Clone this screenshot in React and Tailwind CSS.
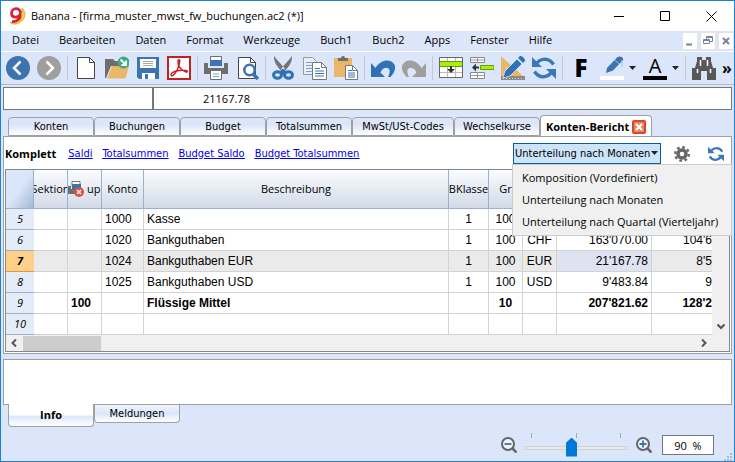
import React from "react";

const Icon = ({ label, children, className = "size-6" }) => (
  <button type="button" aria-label={label} className="shrink-0">
    <svg viewBox="0 0 24 24" className={className} fill="none">
      {children}
    </svg>
  </button>
);

const Sep = () => <span className="-mx-px h-6 w-px shrink-0 bg-[#c8c8cc]" />;

const Caret = ({ className = "" }) => (
  <svg viewBox="0 0 7 4" className={`h-1 w-[7px] ${className}`} fill="#222">
    <path d="M0 0h7L3.500 4z" />
  </svg>
);

const RefreshPaths = () => (
  <>
    <path d="M4 9.500C6 3 16 0 21.500 8.500M20 14.500C18 21 8 24 2.500 15.500" stroke="#3b78b5" strokeWidth="3.400" />
    <path d="M0 1v10h10z" fill="#3b78b5" />
    <path d="M24 23V13H14z" fill="#3b78b5" />
  </>
);

const Logo = () => (
  <svg viewBox="0 0 18 18" className="h-[18px] w-[18px]" fill="none">
    <path d="M13 1c5 4 4 14-6 16-3 .500-5-.500-6-1.500 6 0 12-4 12-14.500z" fill="#f2d044" stroke="#b59a2c" strokeWidth=".6" />
    <path d="M11.500 6c0-6-9-5.500-9 .2 0 5 6.500 5 8.500 1.500.8 4-3 7.300-8 7" stroke="#d8213b" strokeWidth="2.800" />
  </svg>
);

function Toolbar() {
  return (
    <div className="flex items-center gap-[7px] overflow-hidden border-b border-[#b4b8c0] py-1 pl-[5px]">
      <Icon label="Zurück">
        <circle cx="12" cy="12" r="12" fill="#3b74b0" />
        <path d="M14.500 5.500L8 12l6.500 6.500" stroke="#fff" strokeWidth="2.500" />
      </Icon>
      <Icon label="Vorwärts">
        <circle cx="12" cy="12" r="12" fill="#9f9f9f" />
        <path d="M9.500 5.500L16 12l-6.500 6.500" stroke="#fff" strokeWidth="2.500" />
      </Icon>
      <Sep />
      <Icon label="Neu">
        <path d="M3.500 1.500h12l5 5v16h-17z" fill="#fff" stroke="#444" />
        <path d="M15.500 1.500v5h5" stroke="#444" />
      </Icon>
      <Icon label="Öffnen">
        <path d="M0 3h8l2 2h9v5H6L1 22H0z" fill="#6e6e6e" />
        <path d="M7 10h17l-3.500 12.500H2z" fill="#ecb667" />
        <circle cx="18.500" cy="6.500" r="6" fill="#41a886" />
        <path d="M15.500 3.500l5 5M21 4.500v4.500h-4.500" stroke="#fff" strokeWidth="1.800" />
      </Icon>
      <Icon label="Speichern">
        <path d="M1 1h22v22H3l-2-2z" fill="#3b74b0" />
        <path d="M4 3h16v9H4z" fill="#fff" />
        <path d="M7 5.500h10M7 7.500h10M7 9.500h10" stroke="#aaa" />
        <path d="M6 17h13v6H6z" fill="#fff" />
        <path d="M9 18h3v5H9z" fill="#3b74b0" />
      </Icon>
      <Icon label="PDF">
        <path d="M1 1h22v22H1z" fill="#fff" stroke="#c32020" strokeWidth="2" />
        <path d="M4 18.500c1-3 8-5 15-4 2 .5 1.500 2 0 1.500-5-1.500-8.500-6.500-8-11 .3-2 2-1.500 1.800.5C12 11 9.500 16 6.500 19c-1.500 1.300-2.800.700-2.500-.5z" stroke="#c32020" strokeWidth="1.500" />
      </Icon>
      <Sep />
      <Icon label="Drucken">
        <path d="M6.500.500h11V8h-11z" fill="#fff" stroke="#6e6e6e" />
        <path d="M6 4h12v6H6z" fill="#3b74b0" />
        <path d="M0 7h4v5h16V7h4v11H0z" fill="#6e6e6e" />
        <path d="M6.500 14.500h11v9h-11z" fill="#fff" stroke="#6e6e6e" />
        <path d="M9 18h6M9 20.500h6" stroke="#72a4d5" />
      </Icon>
      <Icon label="Seitenansicht">
        <path d="M3.500 1.500h12l5 5v16h-17z" fill="#fff" stroke="#444" />
        <path d="M15.500 1.500v5h5" stroke="#444" />
        <circle cx="14.500" cy="14" r="5.200" fill="#fff" stroke="#3b74b0" strokeWidth="2.600" />
        <path d="M18 18l5 5" stroke="#3b74b0" strokeWidth="3.400" />
      </Icon>
      <Sep />
      <Icon label="Ausschneiden">
        <path d="M2 0c-.5 6 3.500 11 8 16l3-3C10 9 5 4 2 0zM20 0c.5 6-3.500 11-8 16l-3-3c3-4 8-9 11-13z" fill="#747474" />
        <path d="M7.500 16l3.500-3.500L14.500 16 11 19z" fill="#2f72b8" />
        <ellipse cx="5.500" cy="19" rx="4" ry="3.200" stroke="#2f72b8" strokeWidth="3" />
        <ellipse cx="16.500" cy="19" rx="4" ry="3.200" stroke="#2f72b8" strokeWidth="3" />
      </Icon>
      <Icon label="Kopieren">
        <path d="M.500 1.500h9l4 4v13H.500z" fill="#e8effb" stroke="#999" />
        <path d="M3 6.500h6M3 9.500h6M3 12.500h6M3 15.500h6" stroke="#7ba0cb" />
        <path d="M9.500 6.500h9l5 5v12h-14z" fill="#fff" stroke="#777" />
        <path d="M18.500 6.500v5h5" stroke="#777" />
        <path d="M12 12.500h5M12 15h9M12 17.500h9M12 20h9" stroke="#3b74b0" />
      </Icon>
      <Icon label="Einfügen">
        <path d="M0 2h18v19H0z" fill="#ecb667" />
        <path d="M4 5V2h3a2 2 0 0 1 4 0h3v3z" fill="#6e6e6e" />
        <path d="M11.500 9.500h7l5 5v9h-12z" fill="#fff" stroke="#777" />
        <path d="M18.500 9.500v5h5" stroke="#777" />
        <path d="M14 14.500h4M14 17h7M14 19h7M14 21h7" stroke="#3b74b0" />
      </Icon>
      <Sep />
      <Icon label="Rückgängig">
        <path d="M0 7v14h14l-4.500-4.500C11 12 17 10 18.500 14c.5 2-.5 5-1.500 7h2.500c4-4 6-10 3.500-13C19 2 9 4 4.500 12z" fill="#2f72b8" />
      </Icon>
      <Icon label="Wiederholen">
        <path d="M24 7v14H10l4.500-4.500C13 12 7 10 5.500 14c-.5 2 .5 5 1.500 7H4.500C.5 17-1.500 11 1 8 5 2 15 4 19.500 12z" fill="#9f9f9f" />
      </Icon>
      <Sep />
      <Icon label="Zeilen einfügen">
        <path d="M.500 1.500h23v20H.500z" fill="#fff" />
        <path d="M8.500 1v21M16.500 1v21M.500 16.500h23" stroke="#bbb" />
        <path d="M.500 5.500h23v5H.500z" fill="#a6f200" stroke="#6b9a10" />
        <path d="M.500 1.500h23v20H.500z" stroke="#666" />
        <path d="M11 10h2v3h3l-4 4-4-4h3z" fill="#333" />
      </Icon>
      <Icon label="Zeilen hinzufügen">
        <path d="M.500 1.500h14v5H.500zM.500 16.500h14v6H.500z" fill="#fff" stroke="#888" />
        <path d="M7.500 1v6M7.500 16v7M0 4h15M0 19.500h15" stroke="#999" />
        <path d="M10.500 9.500H24v4H10.500z" fill="#a6f200" stroke="#6b9a10" />
        <path d="M2 11.500l4-4v3h3v2H6v3z" fill="#333" />
      </Icon>
      <Icon label="Prüfen">
        <path d="M0 0l22 20H0z" fill="#ecb667" />
        <path d="M5 11v5h6z" fill="#dce6fa" />
        <path d="M0 20h24v4H0z" fill="#8a8a8a" />
        <path d="M2 22.500h20" stroke="#ddd" strokeDasharray="1 2" />
        <path d="M2 22l2-7L16 3l5 5L9 20z" fill="#2f72b8" stroke="#fff" strokeWidth=".6" />
        <path d="M17 2l2-2c2 0 5 2 5 5l-2 2z" fill="#2f72b8" />
      </Icon>
      <Icon label="Neu berechnen">
        <RefreshPaths />
      </Icon>
      <Sep />
      <button type="button" aria-label="Fett" className="flex size-6 shrink-0 items-center justify-center">
        <span className="text-2xl leading-6 font-extrabold">F</span>
      </button>
      <div className="flex shrink-0 items-center">
        <Icon label="Hintergrundfarbe">
          <path d="M0 20h24v4H0z" fill="#fff" />
          <path d="M6 17l1-5L17 1.500c2-2 7-1 6 2.500L13 14.500z" fill="#3b74b0" />
          <path d="M15 4l4 4M22 4v7" stroke="#9cc0e5" />
        </Icon>
        <span className="flex w-3 justify-end"><Caret /></span>
      </div>
      <div className="flex shrink-0 items-center">
        <button type="button" aria-label="Textfarbe" className="flex size-6 flex-col items-center justify-between border-b-4 border-black">
          <span className="text-xl leading-5">A</span>
        </button>
        <span className="flex w-3 justify-end"><Caret /></span>
      </div>
      <Sep />
      <Icon label="Suchen">
        <path d="M5 1h5v3h4V1h5v4l2 7h3v12h-9v-9h-6v9H0V12h3l2-7z" fill="#585858" />
        <path d="M8.500 4v6M15.500 4v6M5.500 13v4M18.500 13v4" stroke="#fff" strokeWidth="1.500" />
      </Icon>
      <button type="button" className="-ml-px shrink-0 text-base leading-none font-bold">»</button>
    </div>
  );
}

const cell = "h-[21px] overflow-hidden border-r border-b border-[#d2d2d2] px-[3px] py-0 whitespace-nowrap";

const rows = [
  { n: 5, konto: "1000", text: "Kasse", k: "1", g: "100", cur: "", a: "", b: "" },
  { n: 6, konto: "1020", text: "Bankguthaben", k: "1", g: "100", cur: "CHF", a: "163'070.00", b: "104'6" },
  { n: 7, konto: "1024", text: "Bankguthaben EUR", k: "1", g: "100", cur: "EUR", a: "21'167.78", b: "8'5", active: true },
  { n: 8, konto: "1025", text: "Bankguthaben USD", k: "1", g: "100", cur: "USD", a: "9'483.84", b: "9" },
  { n: 9, grp: "100", text: "Flüssige Mittel", g: "10", a: "207'821.62", b: "128'2", bold: true },
  { n: 10 },
];

const head = "overflow-hidden border-r border-b border-[#9ab2d0] bg-linear-to-b from-[#fafcfe] to-[#d3dbe8] p-0 font-normal whitespace-nowrap";

function Grid() {
  return (
    <div className="border border-[#828790]">
      <div className="flex">
        <div className="min-w-0 flex-1 overflow-hidden">
          <table className="w-full table-fixed border-separate border-spacing-0 font-['Liberation_Sans',sans-serif] text-xs leading-4">
            <colgroup>
              <col className="w-7" />
              <col className="w-[34px]" />
              <col className="w-[34px]" />
              <col className="w-[42px]" />
              <col />
              <col className="w-10" />
              <col className="w-[34px]" />
              <col className="w-[34px]" />
              <col className="w-[95px]" />
              <col className="w-[60px]" />
            </colgroup>
            <thead>
              <tr className="h-[39px] font-['Open_Sans',sans-serif] text-[11px]">
                <th aria-label="Zeile" className="border-r border-b border-[#9ab2d0] bg-linear-to-br from-[#dce6fa] from-50% to-[#a3b8d4] p-0" />
                <th className={head}><div className="flex justify-center">Sektion</div></th>
                <th className={head}>
                  <div className="flex items-center gap-[3px] overflow-hidden">
                    <svg viewBox="0 0 16 16" className="size-4 shrink-0" fill="none">
                      <path d="M4 .500h8V5H4z" fill="#fff" stroke="#777" />
                      <path d="M4 3h9v5H4z" fill="#3b74b0" />
                      <path d="M0 5h3v3h12v5H0z" fill="#6e6e6e" />
                      <circle cx="11" cy="11" r="5" fill="#d9503f" />
                      <path d="M9 9l4 4M13 9l-4 4" stroke="#fff" strokeWidth="1.500" />
                    </svg>
                    up
                  </div>
                </th>
                <th className={head}>Konto</th>
                <th className={head}>Beschreibung</th>
                <th className={head}><div className="flex justify-center">BKlasse</div></th>
                <th className={head}>Gr</th>
                <th className={head} />
                <th className={head} />
                <th className={head} />
              </tr>
            </thead>
            <tbody>
              {rows.map((r) => (
                <tr key={r.n} className={`${r.active ? "bg-[#eaeaea]" : "bg-white"} ${r.bold ? "font-bold" : ""}`}>
                  <th
                    scope="row"
                    className={`border-b p-0 text-center font-['Open_Sans',sans-serif] text-[11px] italic ${r.active ? "border-[#e8983c] bg-[#ffd08a] font-bold" : "border-[#9ab2d0] bg-[#e4ecf7] font-normal"}`}
                  >
                    {r.n}
                  </th>
                  <td className={cell} />
                  <td className={cell}>{r.grp}</td>
                  <td className={cell}>{r.konto}</td>
                  <td className={cell}>{r.text}</td>
                  <td className={`${cell} text-center`}>{r.k}</td>
                  <td className={`${cell} text-center`}>{r.g}</td>
                  <td className={`${cell} text-center`}>{r.cur}</td>
                  <td className={`${cell} text-right ${r.active ? "bg-[#dfe2f1]" : ""}`}>{r.a}</td>
                  <td className="overflow-hidden border-b border-[#d2d2d2] p-0 text-right">{r.b}</td>
                </tr>
              ))}
            </tbody>
          </table>
        </div>
        <div className="flex w-[17px] flex-col justify-end bg-[#f0f0f0] pb-1">
          <svg viewBox="0 0 8 8" className="mx-auto size-2" fill="none"><path d="M.500 1.500L4 5l3.500-3.500" stroke="#555" strokeWidth="2" /></svg>
        </div>
      </div>
      <div className="flex h-4 items-center bg-[#f0f0f0] pr-[21px] pl-1">
        <svg viewBox="0 0 8 8" className="size-2" fill="none"><path d="M6 .500L2.500 4 6 7.500" stroke="#555" strokeWidth="2" /></svg>
        <div className="ml-[5px] h-[15px] w-[78px] bg-[#cdcdcd]" />
        <svg viewBox="0 0 8 8" className="ml-auto size-2" fill="none"><path d="M2 .500L5.500 4 2 7.500" stroke="#555" strokeWidth="2" /></svg>
      </div>
    </div>
  );
}

const tab = "h-[19px] shrink-0 rounded-t border border-[#a0a0a0] bg-linear-to-b from-[#dce6fa] from-40% to-white pt-px text-center font-['DejaVu_Sans_Condensed','Open_Sans',sans-serif]";

const Magnifier = ({ label, plus }) => (
  <button type="button" aria-label={label}>
    <svg viewBox="0 0 16 16" className="size-4" fill="none">
      <circle cx="7" cy="7" r="6" fill="#eef2fb" stroke="#666" strokeWidth="2" />
      <path d="M11.500 11.500l4 4" stroke="#666" strokeWidth="2.500" />
      <path d={plus ? "M3.500 7h7M7 3.500v7" : "M3.500 7h7"} stroke="#3b74b0" strokeWidth="1.800" />
    </svg>
  </button>
);

export default function App() {
  return (
    <div className="flex min-h-screen flex-col border border-[#1883d7] bg-[#dce6fa] font-['Open_Sans',sans-serif] text-[11px] leading-4 text-black">
      <header className="flex h-[30px] items-center bg-white pr-[17px] pl-2">
        <Logo />
        <h1 className="ml-1">Banana - [firma_muster_mwst_fw_buchungen.ac2 (*)]</h1>
        <div className="ml-auto flex items-center gap-[35px]">
          <button type="button" aria-label="Minimieren"><svg viewBox="0 0 11 11" className="size-[11px]" stroke="#000"><path d="M0 5.500h10" /></svg></button>
          <button type="button" aria-label="Maximieren"><svg viewBox="0 0 11 11" className="size-[11px]" stroke="#000" fill="none"><path d="M.500.500h9v9h-9z" /></svg></button>
          <button type="button" aria-label="Schliessen"><svg viewBox="0 0 11 11" className="size-[11px]" stroke="#000"><path d="M.500.500l10 10M10.500.500l-10 10" /></svg></button>
        </div>
      </header>

      <nav className="flex h-[21px] items-center border-b border-white pl-[11px]">
        <div className="flex h-5 items-center gap-5 pb-0.5">
          {["Datei", "Bearbeiten", "Daten", "Format", "Werkzeuge", "Buch1", "Buch2", "Apps", "Fenster", "Hilfe"].map((m) => (
            <button type="button" key={m}>{m}</button>
          ))}
        </div>
        <div className="ml-auto flex gap-0.5">
          {["M3 11.500h6", "M5.500 6V3.500h6v5H9M2.500 6.500h6v4h-6zM5 4.500h7M2 7.500h7", "M4 5l6 6M10 5l-6 6"].map((d, i) => (
            <button type="button" key={d} aria-label={["Fenster minimieren", "Fenster wiederherstellen", "Fenster schliessen"][i]} className="h-[18px] w-4 border border-[#e4e4e4] bg-white">
              <svg viewBox="0 0 14 16" className="h-4 w-3.5" fill="none" stroke="#74849a" strokeWidth={i === 1 ? 1 : 2}><path d={d} /></svg>
            </button>
          ))}
        </div>
      </nav>

      <Toolbar />

      <div className="mx-0.5 mt-0.5 flex h-[23px] border border-[#777] bg-white">
        <input aria-label="Zelle" className="w-[150px] border-r-2 border-[#777] outline-none" />
        <input aria-label="Inhalt" defaultValue="21167.78" className="min-w-0 flex-1 pl-[49px] outline-none" />
      </div>

      <div className="mx-0.5 mt-[5px] flex items-end overflow-hidden pl-[5px]">
        {["Konten", "Buchungen", "Budget", "Totalsummen"].map((t) => (
          <button type="button" key={t} className={`${tab} w-[86px]`}>{t}</button>
        ))}
        <button type="button" className={`${tab} w-[102px]`}>MwSt/USt-Codes</button>
        <button type="button" className={`${tab} w-[86px]`}>Wechselkurse</button>
        <div className="z-10 -mb-px flex h-[22px] shrink-0 items-center gap-[3px] rounded-t border border-b-0 border-[#a0a0a0] bg-white px-[5px]">
          <button type="button" className="font-bold">Konten-Bericht</button>
          <button type="button" aria-label="Tab schliessen" className="rounded-xs border-2 border-[#d9442e] bg-[#e58a63]">
            <svg viewBox="0 0 10 10" className="size-2.5" stroke="#fff" strokeWidth="2"><path d="M2 2l6 6M8 2L2 8" /></svg>
          </button>
        </div>
      </div>

      <main className="mx-0.5 border border-[#a0a0a0] bg-white p-px">
        <div className="flex h-[31px] items-center">
          <strong className="mr-3">Komplett</strong>
          <div className="flex gap-2.5 font-['DejaVu_Sans_Condensed','Open_Sans',sans-serif] text-[#0000ee] underline">
            <a href="#saldi">Saldi</a>
            <a href="#total">Totalsummen</a>
            <a href="#bsaldo">Budget Saldo</a>
            <a href="#btotal">Budget Totalsummen</a>
          </div>
          <div className="relative ml-auto">
            <select
              aria-label="Unterteilung"
              defaultValue="m"
              className="block h-[21px] w-[148px] appearance-none border border-[#0f5a9c] bg-[#cce4f7] pl-px font-['DejaVu_Sans_Condensed','Open_Sans',sans-serif] outline-none"
            >
              <option value="k">Komposition (Vordefiniert)</option>
              <option value="m">Unterteilung nach Monaten</option>
              <option value="q">Unterteilung nach Quartal (Vierteljahr)</option>
            </select>
            <Caret className="pointer-events-none absolute top-2 right-[3px]" />
            <ul className="absolute top-full -left-px z-20 w-[220px] border border-[#ccc] bg-[#f0f0f0] py-0.5 leading-[22px] whitespace-nowrap">
              {["Komposition (Vordefiniert)", "Unterteilung nach Monaten", "Unterteilung nach Quartal (Vierteljahr)"].map((o) => (
                <li key={o}><button type="button" className="w-full pl-[9px] text-left">{o}</button></li>
              ))}
            </ul>
          </div>
          <button type="button" aria-label="Einstellungen" className="ml-[13px]">
            <svg viewBox="0 0 16 16" className="size-4" fill="none">
              <circle cx="8" cy="8" r="4" stroke="#666" strokeWidth="3.500" />
              <circle cx="8" cy="8" r="6.800" stroke="#666" strokeWidth="2.400" strokeDasharray="2.670 2.670" />
            </svg>
          </button>
          <span className="mr-1.5 ml-[18px] flex">
            <Icon label="Aktualisieren" className="size-4"><RefreshPaths /></Icon>
          </span>
        </div>
        <Grid />
      </main>

      <section className="mx-0.5 mt-[5px] h-[46px] border border-[#a0a0a0] bg-white" />
      <div className="flex items-start pl-[7px]">
        <button type="button" className="z-10 -mt-px h-[23px] w-[86px] rounded-b border border-t-0 border-[#a0a0a0] bg-linear-to-b from-white from-50% via-[#dce6fa] via-55% to-white font-bold">Info</button>
        <button type="button" className="h-[18px] w-[86px] rounded-b border border-t-0 border-[#a0a0a0] bg-linear-to-b from-[#eef3fd] via-[#dce6fa] to-white font-['DejaVu_Sans_Condensed','Open_Sans',sans-serif]">Meldungen</button>
      </div>

      <footer className="mt-auto flex h-8 items-center justify-end pr-0.5">
        <Magnifier label="Verkleinern" />
        <div className="mr-[9px] ml-2 w-[102px]">
          <div className="flex h-[5px] justify-between px-[6px]">
            <span className="w-px bg-[#a8a8a0]" />
            <span className="w-px bg-[#a8a8a0]" />
            <span className="w-px bg-[#a8a8a0]" />
          </div>
          <input
            type="range"
            aria-label="Zoom"
            min="0"
            max="100"
            defaultValue="45"
            className="block h-[19px] w-full appearance-none bg-transparent outline-none [&::-webkit-slider-runnable-track]:h-1 [&::-webkit-slider-runnable-track]:border [&::-webkit-slider-runnable-track]:border-[#d0d0d0] [&::-webkit-slider-runnable-track]:bg-[#e7eaea] [&::-webkit-slider-thumb]:-mt-[9px] [&::-webkit-slider-thumb]:h-[19px] [&::-webkit-slider-thumb]:w-[11px] [&::-webkit-slider-thumb]:appearance-none [&::-webkit-slider-thumb]:bg-[#0078d7] [&::-webkit-slider-thumb]:[clip-path:polygon(50%_0,100%_28%,100%_100%,0_100%,0_28%)]"
          />
        </div>
        <Magnifier label="Vergrössern" plus />
        <input aria-label="Zoomfaktor" defaultValue="90  %" className="ml-2.5 h-5 w-[52px] border border-[#777] bg-white text-center outline-none" />
        <svg viewBox="0 0 8 8" className="ml-2.5 size-2 self-end" fill="#b4b8c0">
          <path d="M6 0h2v2H6zM3 3h2v2H3zM6 3h2v2H6zM0 6h2v2H0zM3 6h2v2H3zM6 6h2v2H6z" />
        </svg>
      </footer>
    </div>
  );
}
